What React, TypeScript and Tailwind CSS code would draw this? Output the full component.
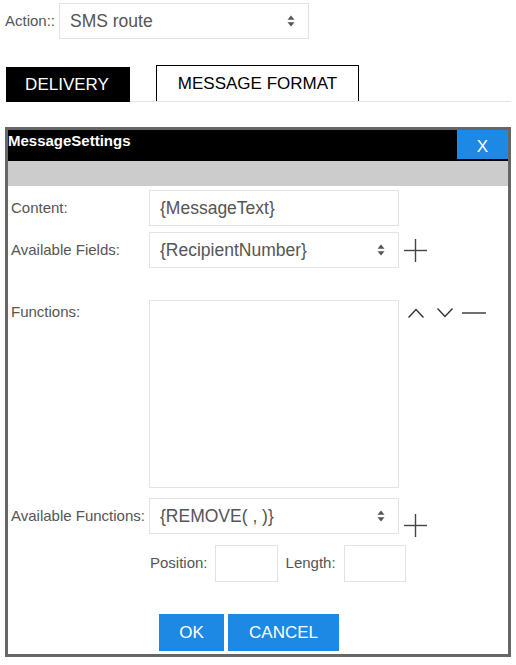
import React from "react";

function SelectArrows() {
  return (
    <svg width="8" height="12" viewBox="0 0 8 12" className="shrink-0">
      <path d="M4 0.5 L7.5 4.8 H0.5 Z" fill="#555" />
      <path d="M4 11.5 L7.5 7.2 H0.5 Z" fill="#555" />
    </svg>
  );
}

function PlusIcon() {
  return (
    <svg width="23" height="23" viewBox="0 0 23 23" className="shrink-0">
      <line x1="11.5" y1="0" x2="11.5" y2="23" stroke="#444" strokeWidth="1.4" />
      <line x1="0" y1="11.5" x2="23" y2="11.5" stroke="#444" strokeWidth="1.4" />
    </svg>
  );
}

function FakeSelect({ value, width }: { value: string; width: string }) {
  return (
    <div className={`flex h-[36px] ${width} items-center justify-between border border-[#e2e2e2] bg-white pl-[10px] pr-[13px] text-[17.5px] text-[#555]`}>
      <span>{value}</span>
      <SelectArrows />
    </div>
  );
}

const label = "w-[141px] shrink-0 pl-[3px] text-[15px] text-[#555]";

export default function App() {
  return (
    <div className="h-[665px] w-[516px] bg-white font-['Liberation_Sans',Arial,sans-serif]">
      {/* action picker */}
      <div className="flex items-center pl-[5px] pt-[3px]">
        <span className="w-[54px] text-[15px] text-[#555]">Action::</span>
        <FakeSelect value="SMS route" width="w-[250px]" />
      </div>

      {/* tabs */}
      <div className="mt-[26px] flex items-end pl-[6px] pr-[5px]">
        <div className="flex h-[35px] w-[124px] items-center justify-center bg-black pr-[2px] text-[17px] text-white">DELIVERY</div>
        <div className="flex flex-1 border-b border-[#e5e5e5] pl-[26px]">
          <div className="flex h-[36px] w-[203px] items-center justify-center border border-b-0 border-black text-[17px] text-black">
            MESSAGE FORMAT
          </div>
        </div>
      </div>

      {/* dialog */}
      <div className="mx-[5px] mt-[25px] border-[3px] border-[#666]">
        <div className="flex h-[31px] items-start justify-between bg-black">
          <span className="text-[15px] font-bold text-white">MessageSettings</span>
          <button className="flex h-[29px] w-[51px] items-center justify-center bg-[#1e88e5] pt-[4px] text-[17px] text-white">X</button>
        </div>
        <div className="h-[25px] bg-[#cccccc]" />

        <div className="flex flex-col pt-[4px]">
          <div className="flex items-center">
            <span className={label}>Content:</span>
            <div className="flex h-[36px] w-[250px] items-center border border-[#e2e2e2] pl-[10px] text-[17.5px] text-[#555]">
              {"{MessageText}"}
            </div>
          </div>

          <div className="mt-[6px] flex items-center">
            <span className={label}>Available Fields:</span>
            <FakeSelect value="{RecipientNumber}" width="w-[250px]" />
            <span className="ml-[5px] pt-[1px]">
              <PlusIcon />
            </span>
          </div>

          <div className="mt-[32px] flex items-start">
            <span className={`${label} pt-[1px]`}>Functions:</span>
            <div className="h-[188px] w-[250px] border border-[#e2e2e2]" />
            <div className="ml-[9px] mt-[8px] flex items-center gap-[13px]">
              <svg width="16" height="10" viewBox="0 0 16 10">
                <polyline points="0.5,9.5 8,1.5 15.5,9.5" fill="none" stroke="#333" strokeWidth="1.4" />
              </svg>
              <svg width="16" height="10" viewBox="0 0 16 10">
                <polyline points="0.5,0.5 8,8.5 15.5,0.5" fill="none" stroke="#333" strokeWidth="1.4" />
              </svg>
              <svg width="24" height="10" viewBox="0 0 24 10" className="-ml-[4px]">
                <line x1="0" y1="5" x2="24" y2="5" stroke="#333" strokeWidth="1.4" />
              </svg>
            </div>
          </div>

          <div className="mt-[10px] flex items-center">
            <span className={label}>Available Functions:</span>
            <FakeSelect value="{REMOVE( , )}" width="w-[250px]" />
            <span className="-mb-[3px] ml-[5px] self-end">
              <PlusIcon />
            </span>
          </div>

          <div className="mt-[11px] flex items-center pl-[142px] text-[15px] text-[#555]">
            <span>Position:</span>
            <div className="ml-[7px] h-[37px] w-[63px] border border-[#e2e2e2]" />
            <span className="ml-[8px]">Length:</span>
            <div className="ml-[8px] h-[37px] w-[62px] border border-[#e2e2e2]" />
          </div>

          <div className="mt-[32px] flex gap-[4px] pb-[3px] pl-[151px]">
            <button className="h-[37px] w-[65px] bg-[#1e88e5] text-[17px] text-white">OK</button>
            <button className="h-[37px] w-[111px] bg-[#1e88e5] text-[17px] text-white">CANCEL</button>
          </div>
        </div>
      </div>
    </div>
  );
}
